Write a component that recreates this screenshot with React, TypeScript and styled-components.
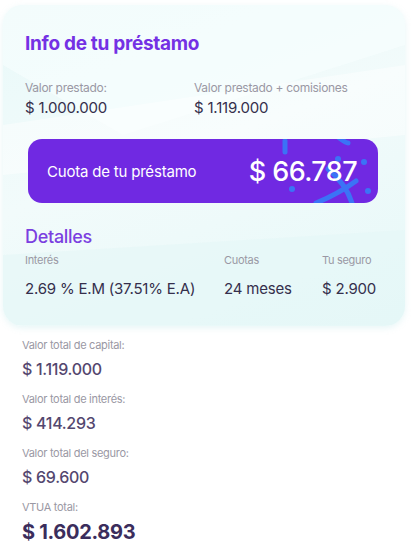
import React from 'react';
import styled, { createGlobalStyle } from 'styled-components';

const GlobalStyle = createGlobalStyle`
    body {
        margin: 0;
        background: #ffffff;
        font-family: Inter, "Open Sans", sans-serif;
    }
`;

const Page = styled.div`
    width: 411px;
    padding: 5px 6px 0 3px;
    box-sizing: border-box;
`;

const Card = styled.section`
    position: relative;
    overflow: hidden;
    border-radius: 20px;
    padding: 27px 27px 28px 22px;
    background: linear-gradient(160deg, #e9f9f9 0%, #f2fbfb 45%, #e6f8f8 100%);
    box-shadow: 0 2px 6px rgba(160, 220, 225, 0.25);
`;

const Sheen = styled.svg`
    position: absolute;
    inset: 0;
    pointer-events: none;
`;

const Title = styled.h2<{ $weight?: number }>`
    position: relative;
    margin: 0;
    font-size: ${p => (p.$weight ? 18 : 19)}px;
    line-height: 24px;
    font-weight: ${p => p.$weight ?? 700};
    color: ${p => (p.$weight ? '#7b3fe0' : '#7431e4')};
    letter-spacing: -0.3px;
`;

const PairRow = styled.div`
    position: relative;
    display: grid;
    grid-template-columns: 169px 1fr;
    margin-top: 24px;
`;

const DetailRow = styled.div`
    position: relative;
    display: grid;
    grid-template-columns: 199px 98px 1fr;
    margin-top: 4px;
`;

const Label = styled.div<{ $size?: number }>`
    font-size: ${p => p.$size ?? 12}px;
    line-height: 15px;
    color: #9a98a4;
    letter-spacing: -0.3px;
`;

const Value = styled.div<{ $gap?: number }>`
    margin-top: ${p => p.$gap ?? 3}px;
    font-size: 15px;
    line-height: 19px;
    font-weight: 400;
    color: #352f4c;
    letter-spacing: -0.2px;
`;

const Banner = styled.div`
    position: relative;
    overflow: hidden;
    display: flex;
    align-items: center;
    justify-content: space-between;
    height: 64px;
    margin: 22px 0 22px 3px;
    padding: 0 21px 0 19px;
    border-radius: 14px;
    background: #7029e2;
    color: #ffffff;
`;

const BannerLabel = styled.span`
    position: relative;
    font-size: 15px;
    letter-spacing: -0.2px;
`;

const BannerAmount = styled.span`
    position: relative;
    font-size: 27px;
    font-weight: 500;
    letter-spacing: -0.6px;
`;

const Dots = styled.svg`
    position: absolute;
    right: 0;
    top: 0;
`;

const Totals = styled.div`
    padding: 12px 0 0 19px;
`;

const TotalItem = styled.div`
    margin-bottom: 13px;
`;

const TotalValue = styled.div<{ $big?: boolean }>`
    margin-top: ${p => (p.$big ? 5 : 7)}px;
    font-size: ${p => (p.$big ? 20 : 16)}px;
    line-height: ${p => (p.$big ? 24 : 19)}px;
    font-weight: ${p => (p.$big ? 700 : 500)};
    color: ${p => (p.$big ? '#3b2d5c' : '#54476f')};
    letter-spacing: -0.3px;
`;

const totals = [
    { label: 'Valor total de capital:', value: '$ 1.119.000' },
    { label: 'Valor total de interés:', value: '$ 414.293' },
    { label: 'Valor total del seguro:', value: '$ 69.600' },
];

export default function App() {
    return (
        <>
            <GlobalStyle />
            <Page>
                <Card>
                    <Sheen width="402" height="320" viewBox="0 0 402 320">
                        <polygon points="0,0 402,0 402,40 120,130 0,60" fill="#f6fdfd" opacity="0.7" />
                        <polygon points="0,120 402,60 402,130 0,170" fill="#ffffff" opacity="0.45" />
                        <polygon points="0,250 402,225 402,320 0,320" fill="#e4f7f7" opacity="0.6" />
                    </Sheen>
                    <Title>Info de tu préstamo</Title>
                    <PairRow>
                        <div>
                            <Label>Valor prestado:</Label>
                            <Value>$ 1.000.000</Value>
                        </div>
                        <div>
                            <Label>Valor prestado + comisiones</Label>
                            <Value>$ 1.119.000</Value>
                        </div>
                    </PairRow>
                    <Banner>
                        <Dots width="110" height="64" viewBox="0 0 110 64">
                            <g fill="none" stroke="#3b73f6" strokeWidth="5" strokeLinecap="round">
                                <line x1="17" y1="2" x2="17" y2="13" />
                                <path d="M70 -2 Q78 4 80 4" />
                                <path d="M48 64 Q70 55 88 42" />
                                <path d="M60 30 Q78 45 84 64" />
                            </g>
                            <g fill="#3b73f6">
                                <circle cx="70" cy="20" r="3" />
                                <circle cx="96" cy="23" r="3" />
                                <circle cx="24" cy="50" r="3" />
                                <circle cx="100" cy="52" r="3" />
                            </g>
                        </Dots>
                        <BannerLabel>Cuota de tu préstamo</BannerLabel>
                        <BannerAmount>$ 66.787</BannerAmount>
                    </Banner>
                    <Title $weight={500}>Detalles</Title>
                    <DetailRow>
                        <div>
                            <Label $size={11}>Interés</Label>
                            <Value $gap={11}>2.69 % E.M (37.51% E.A)</Value>
                        </div>
                        <div>
                            <Label $size={11}>Cuotas</Label>
                            <Value $gap={11}>24 meses</Value>
                        </div>
                        <div>
                            <Label $size={11}>Tu seguro</Label>
                            <Value $gap={11}>$ 2.900</Value>
                        </div>
                    </DetailRow>
                </Card>
                <Totals>
                    {totals.map(t => (
                        <TotalItem key={t.label}>
                            <Label $size={11}>{t.label}</Label>
                            <TotalValue>{t.value}</TotalValue>
                        </TotalItem>
                    ))}
                    <TotalItem>
                        <Label $size={11}>VTUA total:</Label>
                        <TotalValue $big>$ 1.602.893</TotalValue>
                    </TotalItem>
                </Totals>
            </Page>
        </>
    );
}
